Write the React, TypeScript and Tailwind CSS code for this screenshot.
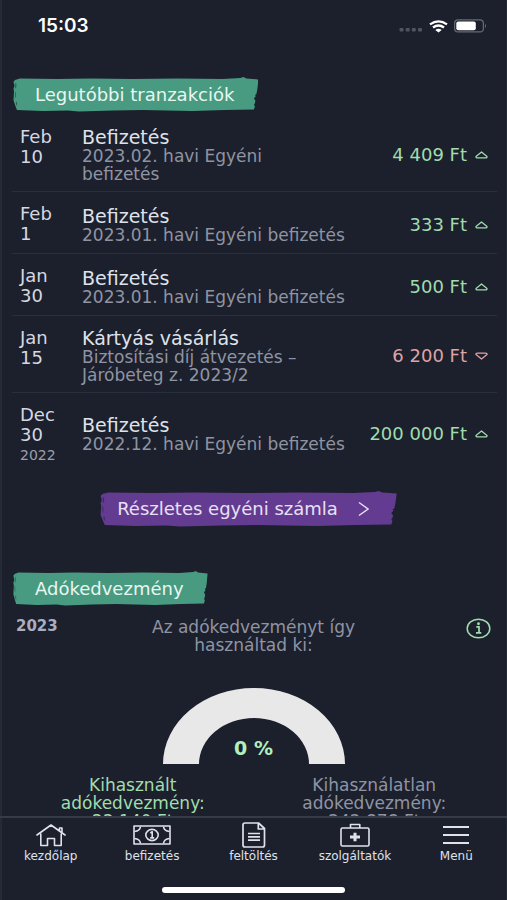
import { useState } from "react";
import type { ReactNode } from "react";
import clsx from "clsx";

type Transaction = {
  id: number;
  month: string;
  day: string;
  year?: string;
  title: string;
  lines: string[];
  amount: string;
  incoming: boolean;
};

const transactions: Transaction[] = [
  { id: 1, month: "Feb", day: "10", title: "Befizetés", lines: ["2023.02. havi Egyéni", "befizetés"], amount: "4 409 Ft", incoming: true },
  { id: 2, month: "Feb", day: "1", title: "Befizetés", lines: ["2023.01. havi Egyéni befizetés"], amount: "333 Ft", incoming: true },
  { id: 3, month: "Jan", day: "30", title: "Befizetés", lines: ["2023.01. havi Egyéni befizetés"], amount: "500 Ft", incoming: true },
  { id: 4, month: "Jan", day: "15", title: "Kártyás vásárlás", lines: ["Biztosítási díj átvezetés –", "Járóbeteg z. 2023/2"], amount: "6 200 Ft", incoming: false },
  { id: 5, month: "Dec", day: "30", year: "2022", title: "Befizetés", lines: ["2022.12. havi Egyéni befizetés"], amount: "200 000 Ft", incoming: true },
];

function StatusBar() {
  return (
    <header className="flex h-13 shrink-0 items-center justify-between pl-[38px] pr-5">
      <span className="font-['Inter',sans-serif] text-[19px] font-semibold text-white">15:03</span>
      <div className="flex items-center gap-[6px]">
        <svg width="24" height="16" viewBox="0 0 24 16" fill="#50545f">
          <rect x="0.5" y="10" width="4" height="3.4" rx="1" />
          <rect x="6.7" y="10" width="4" height="3.4" rx="1" />
          <rect x="12.8" y="10" width="4" height="3.4" rx="1" />
          <rect x="19" y="10" width="4" height="3.4" rx="1" />
        </svg>
        <svg width="19" height="13" viewBox="0 0 19 13" fill="none" stroke="#fff" strokeWidth="2.3">
          <path d="M1 4.4Q9.5-1.6 18 4.4" />
          <path d="M4 7.5Q9.5 3.5 15 7.5" />
          <path d="M6.3 9.9Q9.5 7.8 12.7 9.9L9.5 12.6Z" fill="#fff" stroke="none" />
        </svg>
        <svg width="33" height="14" viewBox="0 0 33 14" fill="none">
          <rect x="0.6" y="0.9" width="28.8" height="12" rx="3.5" stroke="#666a74" strokeWidth="1.2" />
          <rect x="2.3" y="2.5" width="19.5" height="8.8" rx="2" fill="#fff" />
          <path d="M31 4.8q2 2.2 0 4.4z" fill="#666a74" />
        </svg>
      </div>
    </header>
  );
}

// Paint stroke that sits behind headings and the primary link
function Brush({ className }: { className: string }) {
  return (
    <svg className={clsx("absolute inset-0 size-full", className)} viewBox="0 0 246 36" preserveAspectRatio="none" fill="currentColor" aria-hidden="true">
      <path d="M2 3L7 1.5L44 2L78 1.5L120 2L165 1.5L210 2L228 1L231 0L234 1.5L246 2.5L245 12L244 17.5L242.5 18.5L243.5 19.5L241.5 22L243 24.5L242.5 27L241.5 28.5L242.5 30L241.5 33.5L212 34L180 35L130 34L100 34.5L66 35.5L55 34.5L30 35L4 34L2.5 30L1.5 27L0.5 24L1 15L0.5 12L1.5 9L0.5 5Z" />
      <path d="M2.5 6l1 1-.4 5-1-1zM2 15l.8 1v6l-.8-2zM3 25l1 1v4l-1-2z" fill="#1c202c" opacity=".5" />
    </svg>
  );
}

function SectionTitle({ children }: { children: ReactNode }) {
  return (
    <h2 className="relative ml-[13px] flex h-[35px] w-fit items-center pr-6 pl-[22px] text-lg text-[#e9f6f0]">
      <Brush className="text-[#489b81]" />
      <span className="relative">{children}</span>
    </h2>
  );
}

function TransactionRow({ item }: { item: Transaction }) {
  return (
    <li className="flex min-h-[62px] items-center border-b border-[#2a2f3d] pt-3 pb-2 last:border-b-0">
      <div className="w-[70px] shrink-0 self-start pl-2 text-lg leading-5 text-[#d5d8e2]">
        <p>{item.month}</p>
        <p>{item.day}</p>
        {item.year && <p className="pt-[2px] text-sm leading-4 text-[#9a9fae]">{item.year}</p>}
      </div>
      <div className="min-w-0 flex-1">
        <p className="text-[19px] leading-5 text-[#dfe2ea]">{item.title}</p>
        {item.lines.map((line) => (
          <p key={line} className="text-[17px] leading-[18px] whitespace-nowrap text-[#8f94a3]">{line}</p>
        ))}
      </div>
      <div className={clsx("flex shrink-0 items-center gap-2 pr-[9px] text-lg", item.incoming ? "text-[#a0dcae]" : "text-[#dea3a5]")}>
        <span>{item.amount}</span>
        <svg width="13" height="8" viewBox="0 0 13 8" fill="none" stroke="currentColor" strokeWidth="1.3" strokeLinejoin="round">
          {item.incoming ? <path d="M6.5 1L12 5.4Q12.3 6.8 10.5 6.8H2.5Q.7 6.8 1 5.4Z" /> : <path d="M6.5 7L12 2.6Q12.3 1.2 10.5 1.2H2.5Q.7 1.2 1 2.6Z" />}
        </svg>
      </div>
    </li>
  );
}

const tabs: { label: string; icon: ReactNode }[] = [
  {
    label: "kezdőlap",
    icon: (
      <svg width="30" height="24" viewBox="0 0 30 24" fill="none" stroke="currentColor" strokeWidth="1.6" strokeLinecap="round" strokeLinejoin="round">
        <path d="M1 12L15 2L29 12M23.5 7.8V5H26V9.5M4.8 11V22.5H11.5V15.5H18.5V22.5H25.2V11" />
      </svg>
    ),
  },
  {
    label: "befizetés",
    icon: (
      <svg width="38" height="24" viewBox="0 0 38 24" fill="none" stroke="currentColor" strokeWidth="1.6" strokeLinejoin="round">
        <rect x="1" y="3" width="36" height="18" />
        <path d="M1.5 8.5Q7 8 7.5 3.5M30.5 3.5Q31 8 36.5 8.5M36.5 15.5Q31 16 30.5 20.5M7.5 20.5Q7 16 1.5 15.5" />
        <ellipse cx="19" cy="12" rx="6.2" ry="5.6" />
        <path d="M17.3 10l1.9-1.2v6M17.2 14.9h4" />
      </svg>
    ),
  },
  {
    label: "feltöltés",
    icon: (
      <svg width="24" height="26" viewBox="0 0 24 26" fill="none" stroke="currentColor" strokeWidth="1.7" strokeLinejoin="round">
        <path d="M3 1H16.5L22.5 6.5V23Q22.5 25 20.5 25H3Q1 25 1 23V3Q1 1 3 1ZM16.3 1V7H22.5" />
        <path d="M6 11.5H18M6 14.8H18M6 18.1H18" />
      </svg>
    ),
  },
  {
    label: "szolgáltatók",
    icon: (
      <svg width="30" height="24" viewBox="0 0 30 24" fill="none" stroke="currentColor" strokeWidth="1.6" strokeLinejoin="round">
        <rect x="1" y="5" width="28" height="18" rx="1.5" />
        <path d="M10.5 5V1.5H19.8V5" />
        <path d="M15 9.7V18.3M10 14H20" strokeWidth="3" />
      </svg>
    ),
  },
  {
    label: "Menü",
    icon: (
      <svg width="26" height="24" viewBox="0 0 26 24" fill="none" stroke="currentColor" strokeWidth="1.8">
        <path d="M0 4H26M0 12H26M0 20H26" />
      </svg>
    ),
  },
];

function TabBar() {
  const [active, setActive] = useState("kezdőlap");

  return (
    <div className="shrink-0 border-t-2 border-[#363b48]">
      <nav className="flex h-[48px] pt-1">
        {tabs.map((tab) => (
          <button
            key={tab.label}
            type="button"
            aria-current={active === tab.label ? "page" : undefined}
            onClick={() => setActive(tab.label)}
            className="flex flex-1 flex-col items-center text-xs leading-4 text-[#dfe1eb]"
          >
            <span className="flex h-[26px] items-center">{tab.icon}</span>
            {tab.label}
          </button>
        ))}
      </nav>
      <div className="flex h-[34px] justify-center pt-[21px]">
        <div className="h-[6px] w-9/25 rounded-full bg-white" />
      </div>
    </div>
  );
}

export default function App() {
  return (
    <div className="flex h-screen flex-col overflow-hidden bg-[#1c202c] font-['DejaVu_Sans',sans-serif] shadow-[inset_2px_0_#252a37,inset_-1px_0_#252a37]">
      <StatusBar />
      <main className="min-h-0 flex-1 overflow-hidden pt-[25px]">
        <section>
          <SectionTitle>Legutóbbi tranzakciók</SectionTitle>
          <ul className="mr-[10px] ml-3 pt-[3px]">
            {transactions.map((item) => (
              <TransactionRow key={item.id} item={item} />
            ))}
          </ul>
          <div className="flex justify-center pt-5 pr-[10px]">
            <a href="#szamla" className="relative flex h-[36px] items-center gap-5 pr-7 pl-[17px] text-lg text-[#e9e0f5]">
              <Brush className="text-[#633b90]" />
              <span className="relative">Részletes egyéni számla</span>
              <svg className="relative" width="11" height="16" viewBox="0 0 11 16" fill="none" stroke="currentColor" strokeWidth="1.4">
                <path d="M1 1.5L10 8L1 14.5" />
              </svg>
            </a>
          </div>
        </section>
        <section className="pt-11">
          <SectionTitle>Adókedvezmény</SectionTitle>
          <div className="flex items-start justify-between px-4 pt-2 text-[#8f94a3]">
            <p className="w-12 text-[15px] leading-6 font-bold text-[#a9aec0]">2023</p>
            <p className="pt-1 text-center text-[17px] leading-[18px]">
              Az adókedvezményt így
              <br />
              használtad ki:
            </p>
            <button type="button" aria-label="Információ" className="flex w-12 justify-end pt-1 text-[#a0dcae]">
              <svg width="25" height="21" viewBox="0 0 25 21" fill="none" stroke="currentColor" strokeWidth="1.5">
                <ellipse cx="12.5" cy="10.5" rx="11.3" ry="9.3" />
                <path d="M10.3 8.8H13V14.7M10 14.9H15.3" strokeWidth="1.7" />
                <circle cx="12.5" cy="5.8" r="0.7" fill="currentColor" />
              </svg>
            </button>
          </div>
          <div className="relative mx-auto mt-[34px] w-[182px]">
            <svg className="block w-full" viewBox="0 0 182 76" fill="#e8e8e8" aria-hidden="true">
              <path d="M0 76A91 76 0 0 1 182 76H146A55 46 0 0 0 36 76Z" />
            </svg>
            <p className="absolute inset-x-0 bottom-1 text-center text-[19px] leading-6 font-bold text-[#b3eebd]">0 %</p>
          </div>
          <div className="grid grid-cols-2 px-3 pt-3 text-center text-[17px] leading-[18px] text-[#8f94a3]">
            <p className="text-[#a0dcae]">
              Kihasznált
              <br />
              adókedvezmény:
              <br />
              22 140 Ft
            </p>
            <p>
              Kihasználatlan
              <br />
              adókedvezmény:
              <br />
              242 878 Ft
            </p>
          </div>
        </section>
      </main>
      <TabBar />
    </div>
  );
}
